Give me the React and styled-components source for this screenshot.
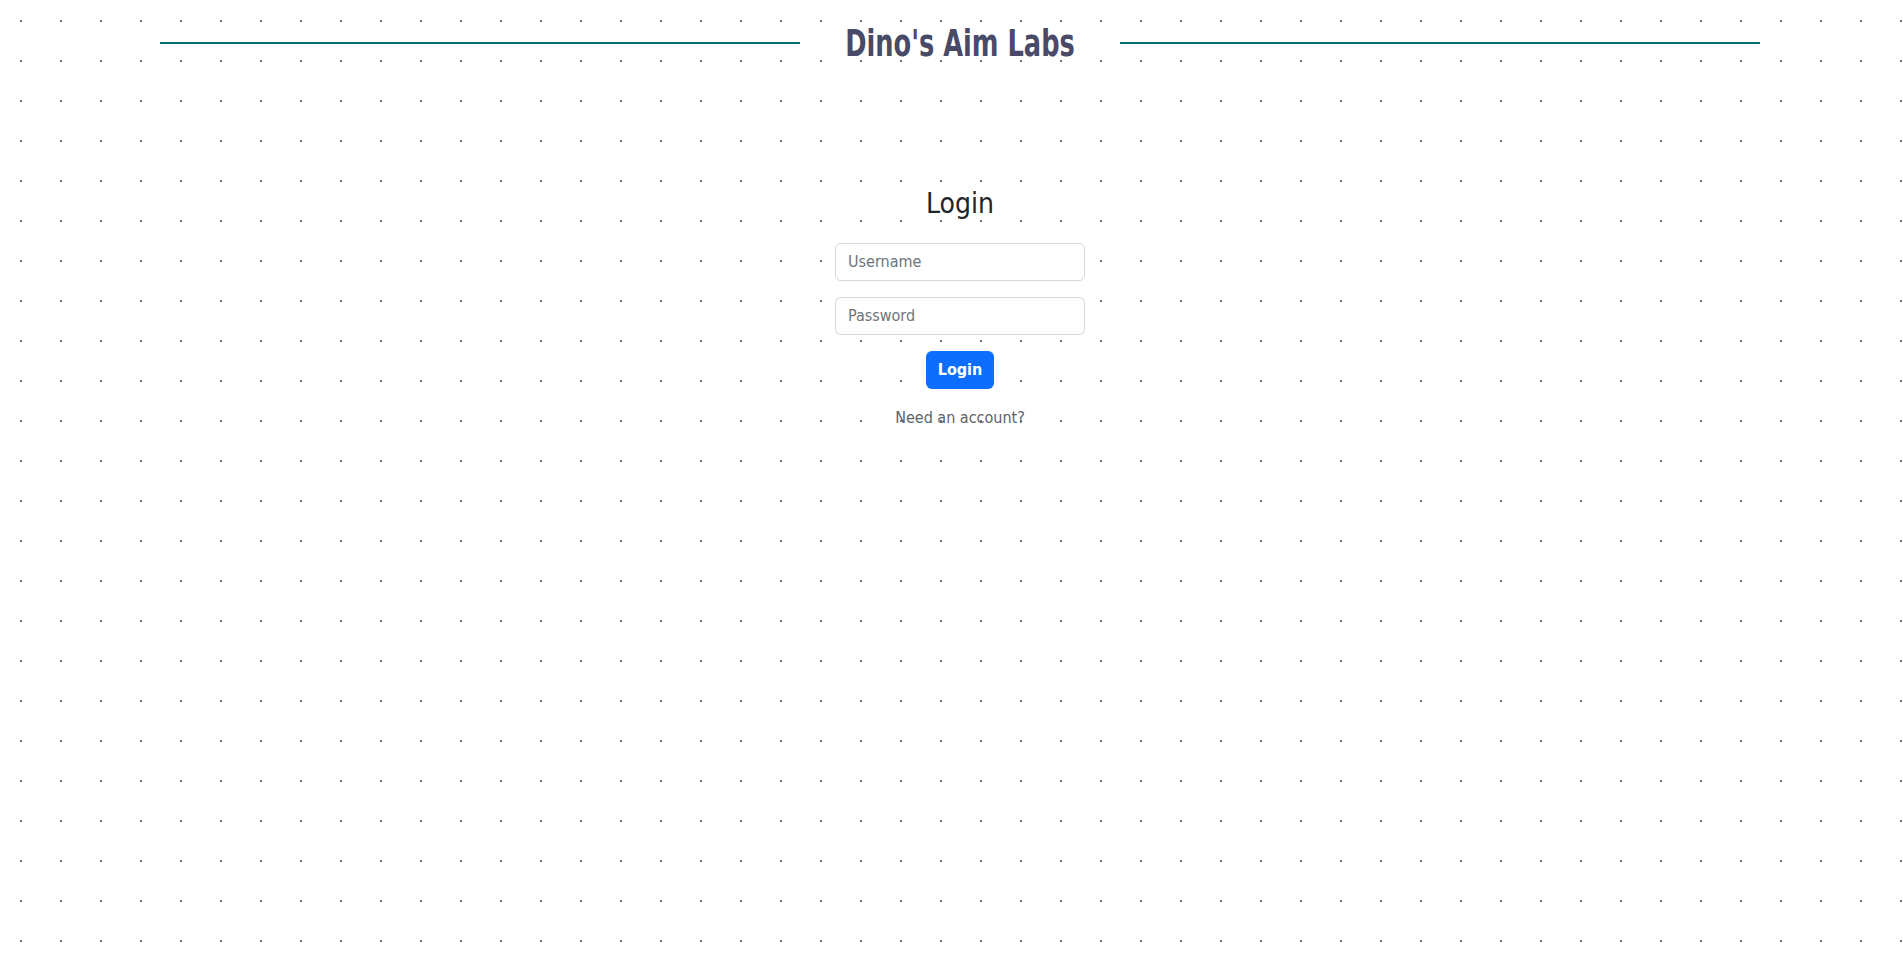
import styled, { createGlobalStyle } from 'styled-components'

const dotGrey = '#6c757d'
const teal = '#006d77'
const slate = '#484a68'
const blue = '#0d6efd'
const borderGrey = '#d3d7dc'

const GlobalStyle = createGlobalStyle`
  html, body {
    margin: 0;
    padding: 0;
    min-height: 100%;
    overflow-x: hidden;
  }
  body {
    min-height: 100vh;
    font-family: "DejaVu Sans Condensed", "Liberation Sans", sans-serif;
    color: #212529;
    background-color: #fff;
    background-image: radial-gradient(circle, ${dotGrey} 1px, transparent 1px);
    background-size: 40px 40px;
    background-position: 1px 1px;
  }
`

const Page = styled.div`
  width: 1920px;
  display: flex;
  flex-direction: column;
  align-items: center;
`

const Header = styled.header`
  width: 1600px;
  height: 86px;
  display: flex;
  align-items: center;
`

const Rule = styled.div`
  flex: 1;
  height: 2px;
  background: ${teal};
`

const Title = styled.h1`
  margin: 0;
  width: 228px;
  padding: 0 46px;
  display: flex;
  justify-content: center;
  font-size: 38px;
  font-weight: 700;
  color: ${slate};
  white-space: nowrap;
`

// no condensed face is installed, so squeeze the bold one
const TitleText = styled.span`
  display: inline-block;
  transform: scaleX(0.75);
`

const Form = styled.form`
  margin-top: 101px;
  width: 250px;
  display: flex;
  flex-direction: column;
  align-items: center;
`

const Heading = styled.h2`
  margin: 0 0 22px;
  font-size: 28px;
  font-weight: 400;
  line-height: 1.2;
  color: #212529;
`

const Input = styled.input`
  box-sizing: border-box;
  width: 100%;
  height: 38px;
  margin-bottom: 16px;
  padding: 6px 12px;
  font-family: inherit;
  font-size: 16px;
  color: #212529;
  background: #fff;
  border: 1px solid ${borderGrey};
  border-radius: 6px;
  outline: none;
  &::placeholder {
    color: #6c757d;
  }
`

const Button = styled.button`
  height: 38px;
  padding: 0 12px;
  min-width: 66px;
  font-family: inherit;
  font-size: 16px;
  font-weight: 700;
  color: #fff;
  background: ${blue};
  border: none;
  border-radius: 6px;
  cursor: pointer;
`

const SwitchLink = styled.a`
  margin-top: 19px;
  font-size: 16px;
  color: #5c636a;
  text-decoration: none;
  cursor: pointer;
`

export default function App() {
  return (
    <>
      <GlobalStyle />
      <Page>
        <Header>
          <Rule />
          <Title>
            <TitleText>Dino's Aim Labs</TitleText>
          </Title>
          <Rule />
        </Header>
        <Form onSubmit={(e) => e.preventDefault()}>
          <Heading>Login</Heading>
          <Input type="text" placeholder="Username" />
          <Input type="password" placeholder="Password" />
          <Button type="submit">Login</Button>
          <SwitchLink>Need an account?</SwitchLink>
        </Form>
      </Page>
    </>
  )
}
